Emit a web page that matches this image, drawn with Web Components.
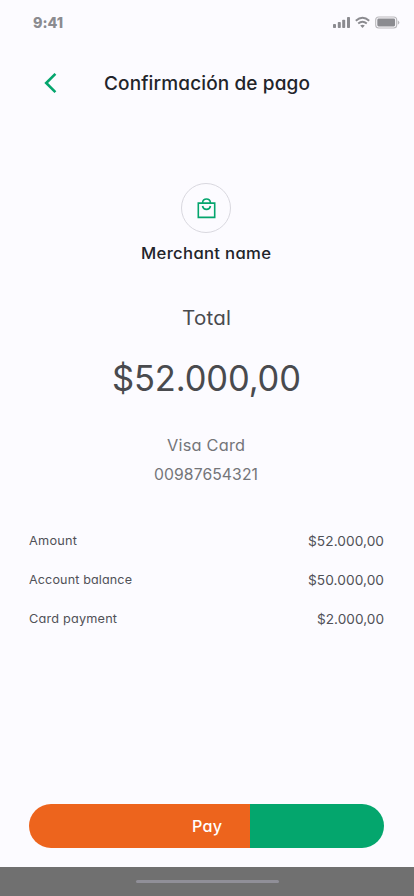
<!DOCTYPE html>
<html lang="es">
<head>
<meta charset="utf-8">
<meta name="viewport" content="width=device-width, initial-scale=1">
<title>Confirmación de pago</title>
<style>
body { margin: 0; background: #fcfbff; font-family: Inter, "Open Sans", sans-serif; font-feature-settings: "cv11"; }
</style>
</head>
<body>
<payment-screen></payment-screen>
<script>
function define(name, html) {
  const template = document.createElement('template');
  template.innerHTML = html;
  customElements.define(name, class extends HTMLElement {
    connectedCallback() {
      if (this.shadowRoot) return;
      this.attachShadow({ mode: 'open' }).append(template.content.cloneNode(true));
    }
  });
}

/* One line of text that fills the given width: widened glyphs plus a little tracking. */
customElements.define('fit-text', class extends HTMLElement {
  connectedCallback() {
    if (this.shadowRoot) return;
    const text = this.getAttribute('text');
    const width = Number(this.getAttribute('width'));
    const root = this.attachShadow({ mode: 'open' });
    root.innerHTML = `<style>
      :host { display: block; flex: none; width: ${width}px; white-space: nowrap; line-height: 1.2; text-align: left; }
      span { display: inline-block; transform-origin: 0 50%; }
    </style><span></span>`;
    const span = root.querySelector('span');
    span.textContent = text;
    const natural = span.getBoundingClientRect().width;
    const stretch = 1 + (width / natural - 1) * 0.7;
    span.style.letterSpacing = (width / stretch - natural) / (text.length - 1) + 'px';
    span.style.transform = `scaleX(${stretch})`;
  }
});

define('status-bar', `<style>
  :host { display: flex; justify-content: space-between; align-items: center; height: 45px; padding: 0 14px 0 33px; color: #8b8b90; box-sizing: border-box; }
  fit-text { font-size: 14.5px; font-weight: 850; }
  svg { display: block; }
</style>
<fit-text text="9:41" width="30"></fit-text>
<svg width="68" height="13" viewBox="0 0 68 13" fill="#8b8b90">
  <rect x="1" y="8" width="3" height="4" rx=".8"/><rect x="5.8" y="6" width="3" height="6" rx=".8"/>
  <rect x="10.2" y="3.7" width="3" height="8.3" rx=".8"/><rect x="15" y="1" width="3" height="11" rx=".8"/>
  <g fill="none" stroke="#8b8b90" stroke-width="1.9"><path d="M23.8 4.7Q30.5-1 37.2 4.7M26.2 7.5Q30.5 3.8 34.8 7.5"/></g>
  <path d="M28.2 9.6Q30.5 7.8 32.8 9.6L30.5 12Z"/>
  <rect x="43.7" y="1" width="21" height="11" rx="3" fill="none" stroke="#b9b8bc" stroke-width="1.1"/>
  <rect x="45.3" y="2.6" width="17.8" height="7.8" rx="1.4"/>
  <path d="M65.8 4.2Q69 6.5 65.8 8.8Z" fill="#b9b8bc"/>
</svg>`);

define('page-header', `<style>
  :host { display: flex; align-items: center; height: 76px; padding-left: 44px; box-sizing: border-box; color: #22242a; }
  svg { display: block; margin: 0 47px 1px 0; }
  fit-text { font-size: 18.5px; font-weight: 480; }
</style>
<svg width="13" height="20" viewBox="0 0 13 20"><path d="M11.4 .9L2.2 10L11.4 19.1" fill="none" stroke="#04a56d" stroke-width="2.6"/></svg>
<fit-text text="Confirmación de pago" width="206"></fit-text>`);

define('merchant-badge', `<style>
  :host { display: flex; flex-direction: column; align-items: center; height: 162px; padding-top: 62px; box-sizing: border-box; color: #22242a; }
  div { width: 48px; height: 48px; border: 1px solid #d9d8df; border-radius: 50%; display: grid; place-items: center; }
  fit-text { font-size: 15.5px; font-weight: 500; margin-top: 11.5px; }
</style>
<div><svg width="19" height="21" viewBox="0 0 19 21" fill="none" stroke="#04a56d" stroke-width="1.6">
  <path d="M1.3 5.1H17.7V19.4H1.3Z M5.6 5.1V4.5Q6 1 9.5 1Q13 1 13.4 4.5V5.1 M5.5 8Q6.3 11.4 9.5 11.4Q12.7 11.4 13.5 8"/>
</svg></div>
<fit-text text="Merchant name" width="130"></fit-text>`);

define('payment-total', `<style>
  :host { display: flex; flex-direction: column; align-items: center; padding-top: 24px; height: 238px; box-sizing: border-box; color: #494a4e; }
  .label { font-size: 19.5px; }
  .sum { font-size: 35px; margin-top: 26.6px; }
  .card { font-size: 15.5px; color: #747579; }
  .card.brand { margin-top: 38px; }
  .card.number { margin-top: 10.4px; }
</style>
<fit-text class="label" text="Total" width="49"></fit-text>
<fit-text class="sum" text="$52.000,00" width="189"></fit-text>
<fit-text class="card brand" text="Visa Card" width="78"></fit-text>
<fit-text class="card number" text="00987654321" width="104"></fit-text>`);

customElements.define('payment-details', class extends HTMLElement {
  connectedCallback() {
    if (this.shadowRoot) return;
    const rows = [['Amount', 48, '$52.000,00', 76], ['Account balance', 103, '$50.000,00', 76], ['Card payment', 88, '$2.000,00', 67]];
    const root = this.attachShadow({ mode: 'open' });
    root.innerHTML = `<style>
      :host { display: block; flex: 1; padding-top: 1px; }
      div { display: flex; justify-content: space-between; align-items: center; height: 39px; padding: 0 30px 0 29px; color: #505157; }
      .name { font-size: 12px; } .value { font-size: 13.5px; }
    </style>` + rows.map(r => `<div><fit-text class="name" text="${r[0]}" width="${r[1]}"></fit-text><fit-text class="value" text="${r[2]}" width="${r[3]}"></fit-text></div>`).join('');
  }
});

define('pay-slider', `<style>
  :host { display: block; padding: 0 30px 19px 29px; }
  button { display: flex; align-items: center; justify-content: center; width: 100%; height: 44px; padding: 2px 0 0; border: 0; border-radius: 22px; background: linear-gradient(90deg, #ed641d 221px, #04a66d 221px); color: #fff; font: 480 15.5px Inter, "Open Sans", sans-serif; font-feature-settings: "cv11"; }
</style>
<button><fit-text text="Pay" width="30"></fit-text></button>`);

define('home-bar', `<style>
  :host { display: flex; justify-content: center; align-items: center; height: 29px; background: #707070; }
  div { width: 143px; height: 3px; border-radius: 2px; background: #908f98; }
</style><div></div>`);

define('payment-screen', `<style>
  :host { display: flex; flex-direction: column; width: 414px; height: 896px; background: #fcfbff; overflow: hidden; }
  merchant-badge, payment-total { width: 412px; }
</style>
<status-bar></status-bar>
<page-header></page-header>
<merchant-badge></merchant-badge>
<payment-total></payment-total>
<payment-details></payment-details>
<pay-slider></pay-slider>
<home-bar></home-bar>`);
</script>
</body>
</html>
